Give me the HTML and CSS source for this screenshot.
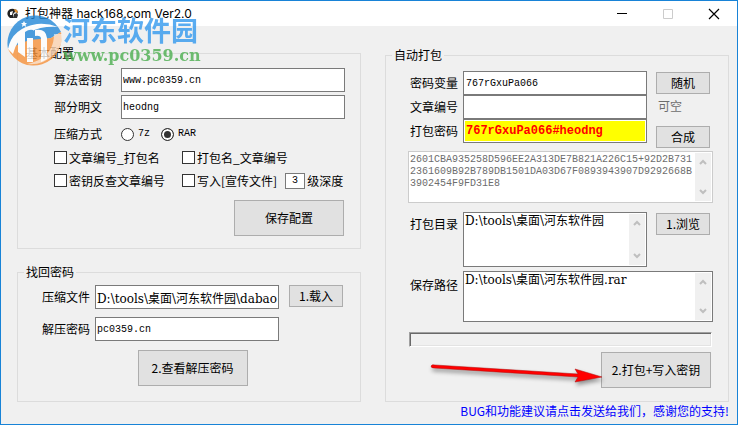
FILE: index.html
```
<!DOCTYPE html>
<html lang="zh-CN">

<head>
    <meta charset="UTF-8">
    <meta name="viewport" content="width=device-width, initial-scale=1.0">
    <title>打包神器 hack168.com Ver2.0</title>
    <link rel="stylesheet" href="styles.css">
</head>

<body>
    <div class="window">
        <!-- Title bar -->
        <header class="titlebar">
            <svg class="app-icon" width="14" height="14" viewBox="0 0 14 14" aria-hidden="true">
                <path d="M2 4 Q4 1 8 2 L11 3 L12 6 L9 5 L7 7 L8 11 L4 11 Q0 8 2 4Z" fill="#222"/>
                <path d="M4 5 L7 4 L6 8 L4 8Z" fill="#fff"/>
                <path d="M8 2 L11 3 L12 6 L9 5Z" fill="#e09030"/>
                <path d="M8 7 L11 6 L12 8 L11 11 L8 11Z" fill="#333"/>
            </svg>
            <h1 class="title">打包神器 hack168.com Ver2.0</h1>
            <div class="caption-buttons">
                <button type="button" aria-label="最小化"><svg width="12" height="12" viewBox="0 0 12 12"><path d="M1 5.5H11" stroke="#000"/></svg></button>
                <button type="button" aria-label="最大化" disabled><svg width="12" height="12" viewBox="0 0 12 12"><path d="M1.5 1.5H10.5V10.5H1.5Z" fill="none" stroke="#ccc"/></svg></button>
                <button type="button" aria-label="关闭"><svg width="12" height="12" viewBox="0 0 12 12"><path d="M1 1L11 11M11 1L1 11" stroke="#000" stroke-width="1.2"/></svg></button>
            </div>
        </header>

        <main class="content">
            <div class="column">
                <!-- Basic settings -->
                <fieldset class="group">
                    <legend>基本配置</legend>
                    <div class="basic">
                        <div class="row">
                            <label for="key">算法密钥</label>
                            <input type="text" id="key" class="latin" value="www.pc0359.cn">
                        </div>
                        <div class="row">
                            <label for="plain">部分明文</label>
                            <input type="text" id="plain" class="latin" value="heodng">
                        </div>
                        <div class="row radios">
                            <span class="row-label">压缩方式</span>
                            <label class="option"><input type="radio" name="type"><span class="latin">7z</span></label>
                            <label class="option"><input type="radio" name="type" checked><span class="latin">RAR</span></label>
                        </div>
                        <div class="checks">
                            <label class="option"><input type="checkbox">文章编号_打包名</label>
                            <label class="option"><input type="checkbox">打包名_文章编号</label>
                            <label class="option"><input type="checkbox">密钥反查文章编号</label>
                            <div class="depth-row">
                                <label class="option"><input type="checkbox">写入[宣传文件]</label>
                                <input type="text" id="depth" class="depth latin" value="3"><label for="depth">级深度</label>
                            </div>
                        </div>
                        <button type="button" class="big-button">保存配置</button>
                    </div>
                </fieldset>

                <!-- Recover password -->
                <fieldset class="group">
                    <legend>找回密码</legend>
                    <div class="recover">
                        <div class="recover-grid">
                            <label for="archive">压缩文件</label>
                            <input type="text" id="archive" class="path" value="D:\tools\桌面\河东软件园\dabao">
                            <button type="button" class="small-button">1.载入</button>
                            <label for="password">解压密码</label>
                            <input type="text" id="password" class="latin" value="pc0359.cn">
                        </div>
                        <button type="button" class="big-button">2.查看解压密码</button>
                    </div>
                </fieldset>
            </div>

            <!-- Auto pack -->
            <fieldset class="group">
                <legend>自动打包</legend>
                <div class="pack">
                    <div class="pack-top">
                        <div class="fields">
                            <div class="row">
                                <label for="variable">密码变量</label>
                                <input type="text" id="variable" class="latin" value="767rGxuPa066">
                            </div>
                            <div class="row">
                                <label for="article">文章编号</label>
                                <input type="text" id="article" class="latin">
                            </div>
                            <div class="row">
                                <label for="pack-password">打包密码</label>
                                <input type="text" id="pack-password" class="highlight" value="767rGxuPa066#heodng">
                            </div>
                        </div>
                        <div class="side">
                            <button type="button" class="small-button">随机</button>
                            <span class="hint">可空</span>
                            <button type="button" class="small-button">合成</button>
                        </div>
                    </div>

                    <div class="memo hash">
                        <textarea class="latin" aria-label="密文" disabled>2601CBA935258D596EE2A313DE7B821A226C15+92D2B731
2361609B92B789DB1501DA03D67F0893943907D9292668B
3902454F9FD31E8</textarea>
                        <div class="scrollbar" aria-hidden="true">
                            <svg width="8" height="6" viewBox="0 0 8 6"><path d="M1 5L4 2L7 5"/></svg>
                            <svg width="8" height="6" viewBox="0 0 8 6"><path d="M1 1L4 4L7 1"/></svg>
                        </div>
                    </div>

                    <div class="row folder">
                        <label for="folder">打包目录</label>
                        <div class="memo">
                            <textarea id="folder" class="path">D:\tools\桌面\河东软件园</textarea>
                            <div class="scrollbar" aria-hidden="true">
                                <svg width="8" height="6" viewBox="0 0 8 6"><path d="M1 5L4 2L7 5"/></svg>
                                <svg width="8" height="6" viewBox="0 0 8 6"><path d="M1 1L4 4L7 1"/></svg>
                            </div>
                        </div>
                        <div class="side"><button type="button" class="small-button">1.浏览</button></div>
                    </div>

                    <div class="row save">
                        <label for="save">保存路径</label>
                        <div class="memo">
                            <textarea id="save" class="path">D:\tools\桌面\河东软件园.rar</textarea>
                            <div class="scrollbar" aria-hidden="true">
                                <svg width="8" height="6" viewBox="0 0 8 6"><path d="M1 5L4 2L7 5"/></svg>
                                <svg width="8" height="6" viewBox="0 0 8 6"><path d="M1 1L4 4L7 1"/></svg>
                            </div>
                        </div>
                    </div>

                    <div class="progress" role="progressbar" aria-label="打包进度" aria-valuenow="0"></div>

                    <div class="pack-action">
                        <button type="button" class="big-button">2.打包+写入密钥</button>
                        <svg class="arrow" width="176" height="32" viewBox="0 0 176 32" aria-hidden="true">
                            <path d="M2 8 Q3 6 6 7 L149 16 L146 11 L173 19 L146 24 L149 19 L5 10 Q2 10 2 8Z" fill="#f00" stroke="#a11" stroke-width="0.5"/>
                        </svg>
                    </div>
                </div>
            </fieldset>
        </main>

        <footer class="footer">
            <a href="#">BUG和功能建议请点击发送给我们，感谢您的支持!</a>
        </footer>

        <!-- Site mark over the top left corner -->
        <div class="watermark">
            <svg width="58" height="58" viewBox="0 0 58 58" aria-hidden="true">
                <!-- disc -->
                <path d="M3 39 A28 28 0 0 1 56 22 L46 28 L3 39Z" fill="#2288d8"/>
                <path d="M56 22 A28 28 0 0 1 3 39 L24 30 L46 28Z" fill="#f7923a"/>
                <!-- swooshes -->
                <path d="M3 39 Q7 18 32 14 Q43 13 53 17 Q36 16 25 22 Q12 28 8 44Z" fill="#fff"/>
                <path d="M57 24 Q58 42 38 52 Q30 55 22 54 Q40 50 46 38 Q49 32 49 24Z" fill="#fff" opacity="0.6"/>
                <!-- pillars -->
                <path d="M13 27 L20 22 V47 L13 42Z" fill="#fff"/>
                <path d="M22 28 H28 V52 H22Z" fill="#fff"/>
                <path d="M30 20 Q41 18 42 28 V49 L36 52 V29 Q36 25 30 26Z" fill="#fff"/>
                <path d="M20 22 Q24 19 28 20 V28 H20Z" fill="#2288d8"/>
                <path d="M19 11 L20 13 L22 13 L20.500 14.500 L21 17 L19 15.500 L17 17 L17.500 14.500 L16 13 L18 13Z" fill="#fff"/>
            </svg>
            <div class="watermark-text">
                <span class="watermark-name">河东软件园</span>
                <span class="watermark-site">www.pc0359.cn</span>
            </div>
        </div>
    </div>
</body>

</html>
```
FILE: styles.css
```
* {
    box-sizing: border-box;
}

body {
    margin: 0;
    background-color: #f0f0f0;
    color: #000;
    font-family: "Noto Sans CJK SC", sans-serif;
    font-size: 12px;
    line-height: 16px;
}

input,
button,
textarea {
    margin: 0;
    font: inherit;
    color: inherit;
    border-radius: 0;
}

.window {
    position: relative;
    min-height: 100vh;
    border: 1px solid #1883d7;
}

/* Title bar */
.titlebar {
    display: flex;
    align-items: center;
    height: 25px;
    padding-left: 5px;
    background-color: #fff;
}

.title {
    flex: 1;
    margin: 0 0 0 5px;
    font-family: Inter, "Noto Sans CJK SC", sans-serif;
    font-size: 12px;
    font-weight: normal;
}

.caption-buttons {
    display: flex;
}

.caption-buttons button {
    display: flex;
    align-items: center;
    justify-content: center;
    width: 46px;
    height: 24px;
    padding: 0;
    border: 0;
    background: none;
}

/* Groups */
.content {
    display: grid;
    grid-template-columns: 1fr 1fr;
    gap: 24px;
    padding: 19px 8px 0 16px;
}

.group {
    min-width: 0;
    margin: 0;
    padding: 0;
    border: 1px solid #dcdcdc;
}

.column .group + .group {
    margin-top: 15px;
}

.content > .group {
    margin-top: 2px;
}

.group legend {
    margin-left: 6px;
    padding: 0 2px;
}

.row {
    display: flex;
    align-items: center;
}

/* Controls */
input[type="text"] {
    flex: 1;
    min-width: 0;
    height: 24px;
    padding: 0 1px;
    border: 1px solid #7a7a7a;
    background-color: #fff;
}

.latin,
input[type="text"].latin {
    font-family: "Liberation Mono", monospace;
    font-size: 10px;
}

.path,
input[type="text"].path {
    font-family: "DejaVu Serif", "Noto Sans CJK SC", serif;
    font-size: 12px;
}

.big-button,
.small-button {
    padding: 0;
    border: 1px solid #adadad;
    background-color: #e1e1e1;
}

.big-button {
    width: 110px;
    height: 36px;
}

.small-button {
    width: 54px;
    height: 22px;
}

.option {
    display: flex;
    align-items: center;
    gap: 2px;
}

input[type="checkbox"],
input[type="radio"] {
    appearance: none;
    width: 13px;
    height: 13px;
    border: 1px solid #333;
    background-color: #fff;
}

input[type="radio"] {
    border-radius: 50%;
}

input[type="radio"]:checked {
    background-color: #333;
    box-shadow: inset 0 0 0 2px #fff;
}

/* Basic settings */
.basic {
    padding: 7px 15px 12px 36px;
}

.basic .row {
    margin-bottom: 3px;
}

.basic .row > label:first-child,
.row-label {
    width: 67px;
}

.basic .radios {
    height: 24px;
    margin-bottom: 0;
}

.radios .option {
    width: 40px;
    gap: 4px;
}

.checks {
    display: grid;
    grid-template-columns: 128px 1fr;
    grid-auto-rows: 23px;
    white-space: nowrap;
}

.depth-row {
    display: flex;
    align-items: center;
}

input[type="text"].depth {
    flex: none;
    width: 20px;
    height: 16px;
    margin: 0 2px 0 8px;
    text-align: center;
}

.basic .big-button {
    display: block;
    margin: 8px 1px 0 auto;
}

/* Recover password */
.recover {
    padding: 5px 17px 15px 24px;
}

.recover-grid {
    display: grid;
    grid-template-columns: 53px 1fr 64px;
    row-gap: 8px;
    align-items: center;
}

.recover-grid .small-button {
    align-self: start;
    justify-self: end;
}

.recover .big-button {
    display: block;
    margin: 9px auto 0;
}

/* Auto pack */
.pack {
    padding: 8px 15px 13px 22px;
}

.pack-top {
    display: flex;
}

.fields {
    flex: 1;
}

.pack .row > label {
    width: 55px;
    padding-left: 2px;
}

.fields input[type="text"] {
    padding: 0 2px;
}

.fields input.highlight {
    box-shadow: inset 0 0 0 1px #fff;
    background-color: #ff0;
    color: #f00;
    font-family: "Liberation Mono", monospace;
    font-weight: bold;
}

.side {
    display: flex;
    flex-direction: column;
    width: 66px;
    padding: 1px 0 0 9px;
}

.hint {
    margin-bottom: 8px;
    padding-left: 2px;
    color: #6d6d6d;
    line-height: 24px;
}

.memo {
    display: flex;
    flex: 1;
    min-width: 0;
    padding: 1px;
    border: 1px solid #7a7a7a;
    background-color: #fff;
}

.memo textarea {
    flex: 1;
    min-width: 0;
    height: 100%;
    padding: 1px 0 0;
    border: 0;
    outline: 0;
    resize: none;
    overflow: hidden;
    background: none;
    white-space: pre;
    line-height: 12px;
}

.scrollbar {
    display: flex;
    flex-direction: column;
    align-items: center;
    justify-content: space-between;
    width: 16px;
    padding: 6px 0;
    background-color: #f0f0f0;
}

.scrollbar path {
    fill: none;
    stroke: #bfbfbf;
    stroke-width: 2;
}

.hash {
    height: 52px;
    margin-top: 3px;
    border-color: #ccc;
    color: #6d6d6d;
}

.folder,
.save {
    align-items: flex-start;
}

.folder {
    margin-top: 9px;
}

.folder > label {
    line-height: 24px;
}

.save > label {
    line-height: 28px;
}

.folder .memo {
    height: 55px;
}

.save {
    margin-top: 4px;
}

.save .memo {
    height: 51px;
}

.progress {
    height: 15px;
    margin: 10px 1px 5px;
    border: 1px solid;
    border-color: #a0a0a0 #fff #fff #a0a0a0;
    box-shadow: inset 1px 1px 0 #696969, inset -1px -1px 0 #e3e3e3;
}

.pack-action {
    position: relative;
    display: flex;
    justify-content: flex-end;
    padding-right: 2px;
}

.arrow {
    position: absolute;
    right: 108px;
    top: 6px;
    filter: drop-shadow(1px 3px 2px rgba(0, 0, 0, 0.4));
}

/* Footer */
.footer {
    padding: 1px 8px 4px;
    text-align: right;
}

.footer a {
    color: #00f;
    text-decoration: none;
}

/* Watermark */
.watermark {
    position: absolute;
    left: 4px;
    top: 9px;
    display: flex;
    opacity: 0.8;
    pointer-events: none;
}

.watermark-text {
    display: flex;
    flex-direction: column;
    padding-top: 4px;
}

.watermark-name {
    color: #3399ee;
    font-size: 27px;
    font-weight: bold;
    line-height: 32px;
}

.watermark-site {
    color: #4caf50;
    font-family: "DejaVu Serif", serif;
    font-size: 16px;
    font-weight: bold;
    line-height: 20px;
}
```
